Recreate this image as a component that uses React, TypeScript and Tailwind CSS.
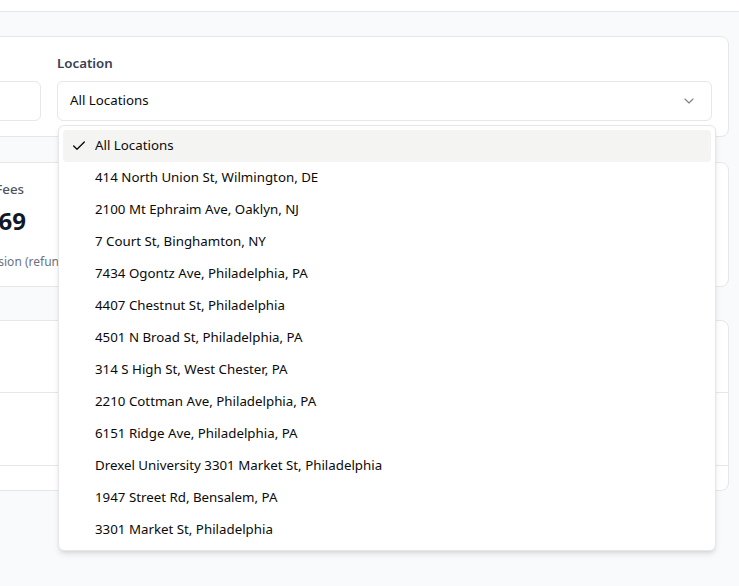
import React from 'react';
import { Check, ChevronDown } from 'lucide-react';

const locations = [
  'All Locations',
  '414 North Union St, Wilmington, DE',
  '2100 Mt Ephraim Ave, Oaklyn, NJ',
  '7 Court St, Binghamton, NY',
  '7434 Ogontz Ave, Philadelphia, PA',
  '4407 Chestnut St, Philadelphia',
  '4501 N Broad St, Philadelphia, PA',
  '314 S High St, West Chester, PA',
  '2210 Cottman Ave, Philadelphia, PA',
  '6151 Ridge Ave, Philadelphia, PA',
  'Drexel University 3301 Market St, Philadelphia',
  '1947 Street Rd, Bensalem, PA',
  '3301 Market St, Philadelphia',
];

export default function App() {
  return (
    <div
      className="relative w-[739px] h-[586px] overflow-hidden bg-[#f9fafb] text-[#0a0a0a]"
      style={{ fontFamily: '"Noto Sans", "Open Sans", sans-serif' }}
    >
      {/* top bar */}
      <div className="h-[12px] bg-white border-b border-[#e5e7eb]" />

      <div className="ml-[-300px] w-[1029px] pt-[24px] flex flex-col">
        {/* filters */}
        <div className="bg-white border border-[#e5e7eb] rounded-lg px-4 pt-4 pb-[15px] flex gap-4">
          <div className="flex-1 flex flex-col gap-2">
            <label className="text-[13.3px] font-semibold text-[#374151] leading-5">Date Range</label>
            <div className="h-10 rounded-md border border-[#e5e7eb] bg-white" />
          </div>
          <div className="w-[655px] flex flex-col gap-2">
            <label className="text-[13.3px] font-semibold text-[#374151] leading-5">Location</label>
            <button className="h-10 rounded-md border border-[#e5e7eb] bg-white pl-3 pr-[14px] flex items-center justify-between text-[13.3px]">
              <span>All Locations</span>
              <ChevronDown className="w-4 h-4 opacity-50" strokeWidth={1.75} />
            </button>
          </div>
        </div>

        {/* stats */}
        <div className="mt-[25px] grid grid-cols-2 gap-4">
          <div className="h-[125px] bg-white border border-[#e5e7eb] rounded-lg pt-4 pl-[222px] flex flex-col">
            <span className="text-[13.3px] leading-5 font-medium text-[#4b5563] whitespace-nowrap">Processing Fees</span>
            <span className="mt-[6px] text-2xl leading-8 font-bold text-[#111827] whitespace-nowrap">$112,269</span>
            <span className="mt-[17px] text-xs leading-4 text-[#6b7280] whitespace-nowrap">After commission (refunds incl.)</span>
          </div>
          <div className="h-[125px] bg-white border border-[#e5e7eb] rounded-lg" />
        </div>

        {/* table */}
        <div className="mt-[33px] h-[171px] bg-white border border-[#e5e7eb] rounded-lg flex flex-col">
          <div className="h-[72px] border-b border-[#e5e7eb]" />
          <div className="h-[73px] border-b border-[#e5e7eb]" />
          <div className="flex-1" />
        </div>
      </div>

      {/* open dropdown */}
      <div className="absolute left-[58px] top-[125px] w-[658px] rounded-md border border-[#e5e7eb] bg-white p-1 shadow-md">
        {locations.map((loc, i) => (
          <div
            key={loc}
            className={`relative h-8 flex items-center pl-8 pr-2 rounded-sm text-[13.3px] ${i === 0 ? 'bg-[#f4f4f3]' : ''}`}
          >
            {i === 0 && (
              <span className="absolute left-2 flex w-4 h-4 items-center justify-center">
                <Check className="w-4 h-4" strokeWidth={2} />
              </span>
            )}
            {loc}
          </div>
        ))}
      </div>
    </div>
  );
}
